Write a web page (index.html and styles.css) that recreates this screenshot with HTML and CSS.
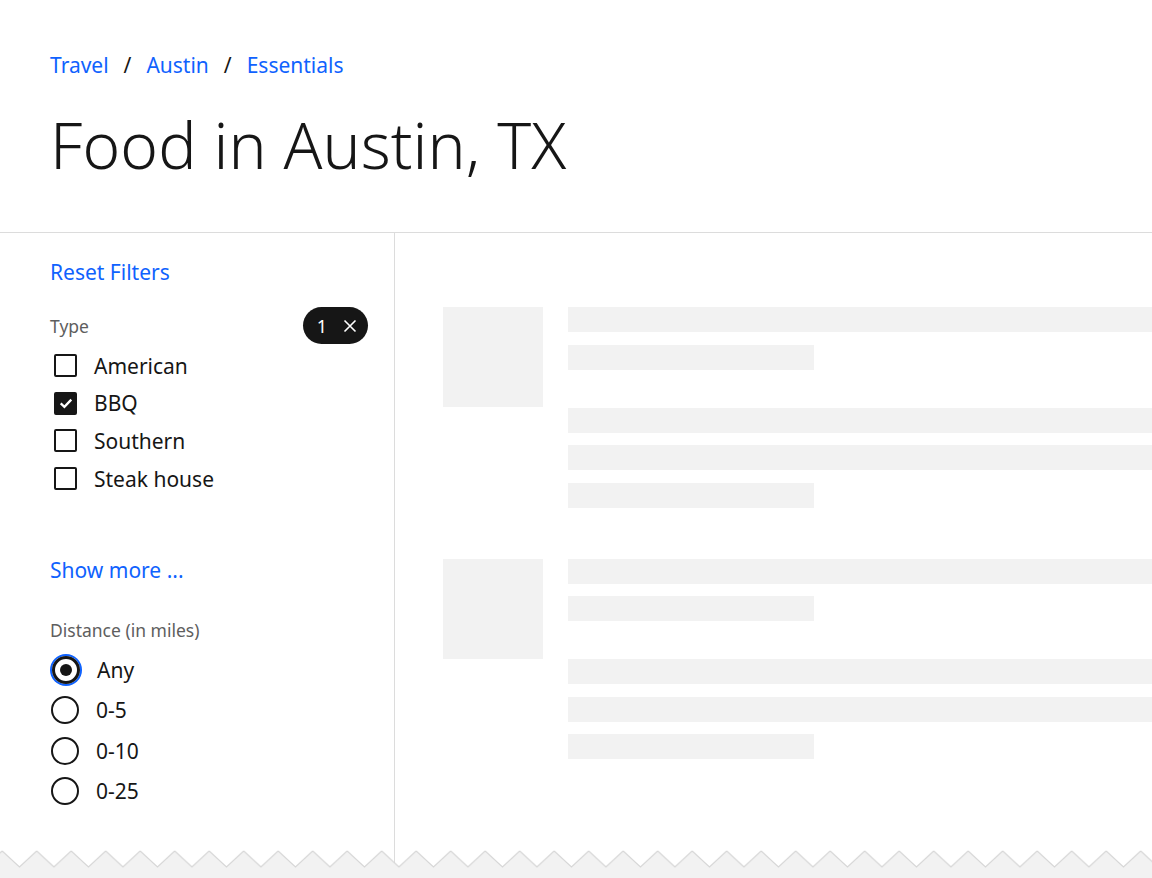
FILE: index.html
```html
<!DOCTYPE html>
<html lang="en">
<head>
<meta charset="utf-8">
<title>Food in Austin, TX</title>
<link rel="stylesheet" href="styles.css">
</head>
<body>
<div class="page">
  <header class="header">
    <nav class="breadcrumb">
      <a class="crumb" href="#">Travel</a>
      <span class="sep">/</span>
      <a class="crumb" href="#">Austin</a>
      <span class="sep">/</span>
      <a class="crumb" href="#">Essentials</a>
    </nav>
    <h1 class="title">Food in Austin, TX</h1>
  </header>
  <div class="body">
    <aside class="sidebar">
      <a class="link reset" href="#">Reset Filters</a>
      <div class="group-head">
        <span class="label">Type</span>
        <span class="tag">1<svg class="tag-x" viewBox="0 0 16 16" width="16" height="16"><path d="M2.5 2.5 L13.5 13.5 M13.5 2.5 L2.5 13.5" stroke="#fff" stroke-width="1.6" fill="none"/></svg></span>
      </div>
      <ul class="checks">
        <li class="check"><span class="box"></span><span class="check-label">American</span></li>
        <li class="check"><span class="box checked"><svg viewBox="0 0 16 16" width="18" height="18"><path d="M3.3 8.3 L6.6 11.4 L12.7 5" stroke="#fff" stroke-width="2" fill="none"/></svg></span><span class="check-label">BBQ</span></li>
        <li class="check"><span class="box"></span><span class="check-label">Southern</span></li>
        <li class="check"><span class="box"></span><span class="check-label">Steak house</span></li>
      </ul>
      <a class="link more" href="#">Show more ...</a>
      <div class="label dist">Distance (in miles)</div>
      <ul class="radios">
        <li class="radio"><span class="circle selected"><span class="dot"></span></span><span class="radio-label">Any</span></li>
        <li class="radio"><span class="circle"></span><span class="radio-label">0-5</span></li>
        <li class="radio"><span class="circle"></span><span class="radio-label">0-10</span></li>
        <li class="radio"><span class="circle"></span><span class="radio-label">0-25</span></li>
      </ul>
    </aside>
    <main class="main">
      <section class="card">
        <div class="thumb"></div>
        <div class="lines">
          <div class="sk"></div>
          <div class="sk short"></div>
          <div class="sk gap"></div>
          <div class="sk"></div>
          <div class="sk short"></div>
        </div>
      </section>
      <section class="card">
        <div class="thumb"></div>
        <div class="lines">
          <div class="sk"></div>
          <div class="sk short"></div>
          <div class="sk gap"></div>
          <div class="sk"></div>
          <div class="sk short"></div>
        </div>
      </section>
    </main>
  </div>
  <svg class="torn" width="1152" height="28" viewBox="0 0 1152 28" preserveAspectRatio="none">
    <defs>
      <pattern id="zz" patternUnits="userSpaceOnUse" x="2.2" y="0" width="34.5" height="28">
        <path d="M0 1 L17.25 17 L34.5 1 L34.5 28 L0 28 Z" fill="#f2f2f2"/>
        <path d="M0 1 L17.25 17 L34.5 1" fill="none" stroke="#d6d6d6" stroke-width="1.2"/>
      </pattern>
    </defs>
    <rect x="0" y="0" width="1152" height="28" fill="url(#zz)"/>
  </svg>
</div>
</body>
</html>
```
FILE: styles.css
```css
* { box-sizing: border-box; }
html, body { margin: 0; padding: 0; background: #fff; }
body {
  font-family: "Noto Sans", "Liberation Sans", sans-serif;
  color: #161616;
}
.page {
  position: relative;
  width: 1152px;
  height: 878px;
  overflow: hidden;
  display: flex;
  flex-direction: column;
}
.header {
  height: 233px;
  padding: 50px 0 0 50px;
  border-bottom: 1px solid #dcdcdc;
  flex: none;
}
.breadcrumb {
  display: flex;
  align-items: center;
  height: 30px;
  font-size: 21px;
  line-height: 30px;
}
.crumb { color: #0f62fe; text-decoration: none; }
.sep { margin: 0 15px; color: #161616; }
.title {
  margin: 22px 0 0 0;
  font-size: 64px;
  line-height: 86px;
  font-weight: 300;
  letter-spacing: 0.1px;
}
.body {
  flex: 1;
  display: flex;
  min-height: 0;
}
.sidebar {
  width: 395px;
  flex: none;
  border-right: 1px solid #dcdcdc;
  padding: 24px 26px 0 50px;
  display: flex;
  flex-direction: column;
  align-items: flex-start;
}
.link {
  color: #0f62fe;
  text-decoration: none;
  font-size: 21px;
  line-height: 30px;
}
.group-head {
  margin-top: 20px;
  width: 100%;
  height: 37px;
  display: flex;
  align-items: center;
  justify-content: space-between;
}
.label {
  color: #5e5e5e;
  font-size: 17.5px;
  line-height: 24px;
}
.tag {
  display: flex;
  align-items: center;
  gap: 15px;
  height: 37px;
  padding: 0 10px 0 14px;
  border-radius: 19px;
  background: #161616;
  color: #fff;
  font-size: 18px;
}
.tag-x { display: block; }
.checks, .radios { list-style: none; margin: 0; padding: 0; }
.checks { margin-top: 3px; }
.check {
  display: flex;
  align-items: center;
  height: 37.6px;
}
.box {
  width: 23px;
  height: 23px;
  margin-left: 4px;
  border: 2px solid #161616;
  border-radius: 2px;
  display: flex;
  align-items: center;
  justify-content: center;
  flex: none;
}
.box.checked { background: #161616; }
.box svg { display: block; }
.check-label {
  margin-left: 17px;
  font-size: 21px;
  line-height: 30px;
}
.more { margin-top: 58px; }
.dist { margin-top: 33px; }
.radios { margin-top: 7px; }
.radio {
  display: flex;
  align-items: center;
  height: 40.5px;
}
.circle {
  width: 28px;
  height: 28px;
  margin-left: 1px;
  border: 2px solid #161616;
  border-radius: 50%;
  display: flex;
  align-items: center;
  justify-content: center;
  flex: none;
}
.circle.selected {
  border-width: 3px;
  box-shadow: 0 0 0 2px #0f62fe;
  margin-left: 2px;
}
.dot {
  width: 12px;
  height: 12px;
  border-radius: 50%;
  background: #161616;
}
.radio-label {
  margin-left: 17px;
  font-size: 21px;
  line-height: 30px;
}
.main {
  flex: 1;
  padding: 74px 0 0 48px;
  display: flex;
  flex-direction: column;
  gap: 51px;
  min-width: 0;
}
.card {
  display: flex;
  align-items: flex-start;
  gap: 25px;
}
.thumb {
  width: 100px;
  height: 100px;
  background: #f2f2f2;
  flex: none;
}
.lines {
  flex: 1;
  display: flex;
  flex-direction: column;
  gap: 12.5px;
}
.sk {
  height: 25px;
  background: #f2f2f2;
}
.sk.short { width: 246px; }
.sk.gap { margin-top: 25.5px; }
.torn {
  position: absolute;
  left: 0;
  bottom: 0;
  display: block;
}
```
